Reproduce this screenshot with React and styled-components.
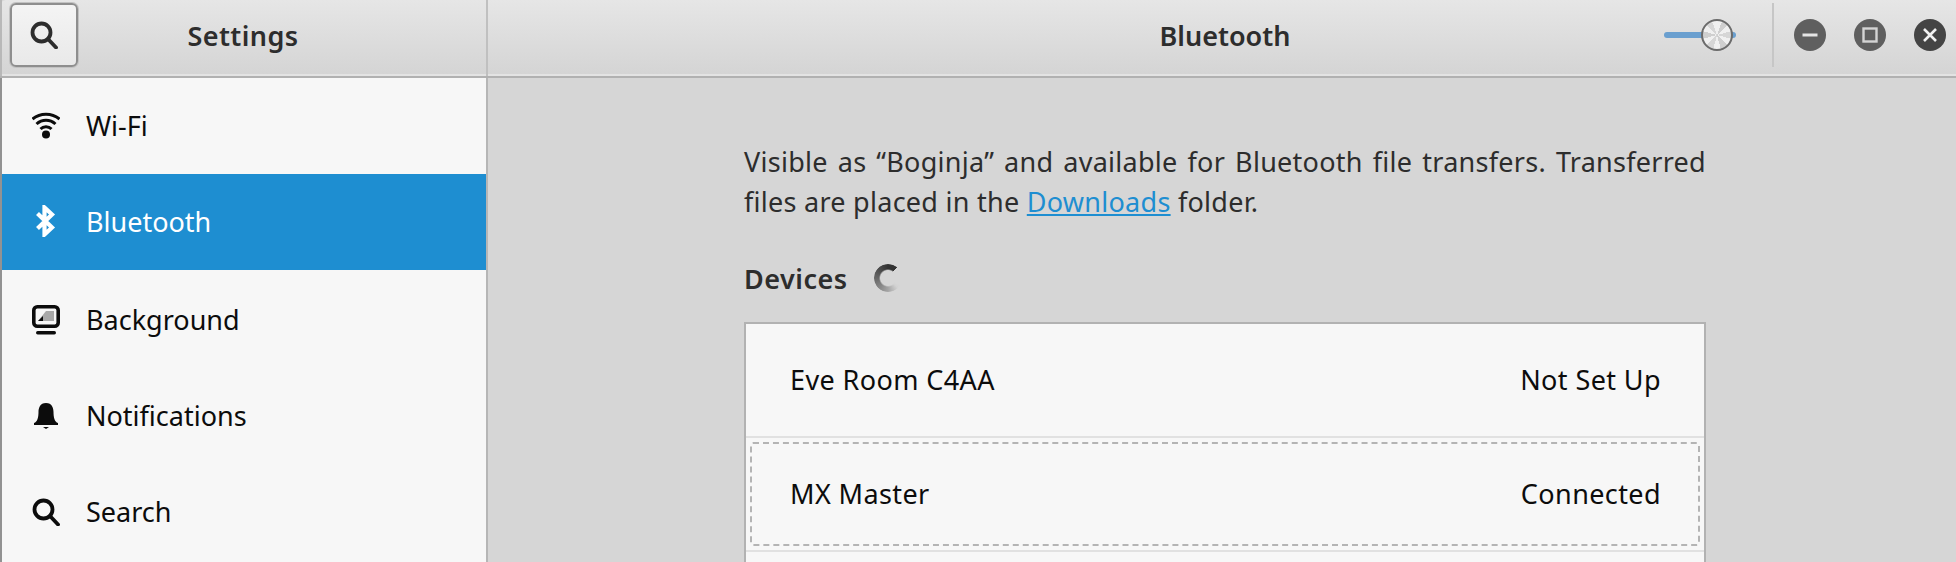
import React from 'react'
import styled, { createGlobalStyle } from 'styled-components'

const GlobalStyle = createGlobalStyle`
  html, body {
    margin: 0;
    height: 100%;
    overflow: hidden;
    background: #d6d6d6;
  }
  body {
    font-family: 'Noto Sans', 'Open Sans', sans-serif;
    font-size: 27px;
    color: #2d2d2d;
  }
`

const Window = styled.div`
  width: 1956px;
  height: 562px;
  display: flex;
  flex-direction: column;
  overflow: hidden;
`

const TitleBar = styled.header`
  height: 78px;
  flex: none;
  display: flex;
  box-sizing: border-box;
  border-bottom: 2px solid #b1b1b1;
  box-shadow: inset 0 -2px 0 #e3e3e3;
  background: linear-gradient(#e6e6e6, #d4d4d4);
  border-top-left-radius: 6px;
`

const SidebarHeader = styled.div`
  width: 488px;
  flex: none;
  box-sizing: border-box;
  display: flex;
  align-items: center;
  padding: 0 0 6px 10px;
  border-left: 2px solid #b8b8b8;
  border-right: 2px solid #c0c0c0;
`

const SearchButton = styled.button`
  width: 68px;
  height: 64px;
  padding: 0;
  display: flex;
  align-items: center;
  justify-content: center;
  box-sizing: border-box;
  border: 2px solid #8e8e8e;
  border-radius: 6px;
  background: linear-gradient(#f4f4f4, #e9e9e9);
  box-shadow: 0 0 0 1px #c2c2c2;
  margin-left: -2px;
`

const HeaderTitle = styled.h1`
  margin: 0;
  padding-top: 2px;
  font-size: 27px;
  font-weight: 600;
  color: #2d2d2d;
  line-height: 36px;
  text-align: center;
  flex: 1;
`

const SidebarTitle = styled(HeaderTitle)`
  padding-right: 78px;
  letter-spacing: 0.4px;
`

const MainHeader = styled.div`
  flex: 1;
  display: flex;
  align-items: center;
  padding: 0 10px 6px 0;
`

const MainTitle = styled(HeaderTitle)`
  padding-left: 298px;
`

const SwitchTrack = styled.div`
  position: relative;
  width: 72px;
  height: 6px;
  border-radius: 3px;
  background: #6a9fcf;
  margin-right: 36px;
`

const SwitchKnob = styled.div`
  position: absolute;
  left: 37px;
  top: -13px;
  width: 32px;
  height: 32px;
  box-sizing: border-box;
  border-radius: 50%;
  border: 2px solid #6b6b6b;
  background: conic-gradient(
    #f0f0f0 0deg 20deg, #cfcfcf 20deg 45deg, #f0f0f0 45deg 75deg, #d6d6d6 75deg 105deg,
    #f0f0f0 105deg 135deg, #cfcfcf 135deg 165deg, #f0f0f0 165deg 195deg, #d6d6d6 195deg 225deg,
    #f0f0f0 225deg 255deg, #cfcfcf 255deg 285deg, #f0f0f0 285deg 315deg, #d6d6d6 315deg 340deg,
    #f0f0f0 340deg
  );
`

const HeaderDivider = styled.div`
  width: 2px;
  height: 64px;
  background: #c6c6c6;
  margin-right: 20px;
`

const WindowButtons = styled.div`
  display: flex;
  gap: 28px;
`

const RoundButton = styled.div`
  width: 32px;
  height: 32px;
  border-radius: 50%;
  display: flex;
  align-items: center;
  justify-content: center;
  background: ${props => (props.$dark ? '#444444' : '#5f5f5f')};
`

const Body = styled.div`
  flex: 1;
  display: flex;
  min-height: 0;
`

const Sidebar = styled.nav`
  width: 488px;
  flex: none;
  box-sizing: border-box;
  border-left: 2px solid #929292;
  border-right: 2px solid #b6b6b6;
  background: #f7f7f7;
`

const SidebarRow = styled.div`
  height: 96px;
  display: flex;
  align-items: center;
  box-sizing: border-box;
  padding: ${props => (props.$lower ? '3px 0 0' : '0 0 2px')};
  background: ${props => (props.$active ? '#1e8ed1' : 'transparent')};
  color: ${props => (props.$active ? '#ffffff' : '#0c0c0c')};
`

const RowIcon = styled.span`
  width: 28px;
  height: 28px;
  margin-left: 30px;
  margin-right: 26px;
  display: flex;
  align-items: center;
  justify-content: center;
`

const Content = styled.main`
  flex: 1;
  padding: 64px 0 0 256px;
`

const Column = styled.div`
  width: 962px;
`

const Intro = styled.div`
  font-size: 27px;
  line-height: 40px;
  color: #2d2d2d;
  letter-spacing: 0.27px;
`

const IntroLine = styled.div`
  white-space: nowrap;
`

const JustifiedLine = styled(IntroLine)`
  white-space: normal;
  text-align: justify;
  text-align-last: justify;
`

const DownloadsLink = styled.a`
  color: #1e8ed1;
  text-decoration: underline;
`

const DevicesHeading = styled.div`
  display: flex;
  align-items: center;
  gap: 26px;
  margin-top: 26px;
  height: 60px;
  font-weight: 600;
  letter-spacing: 0.5px;
  color: #2d2d2d;
`

const Spinner = styled.div`
  width: 28px;
  height: 28px;
  border-radius: 50%;
  background: conic-gradient(from 40deg, transparent 0deg, transparent 80deg, #d2d2d2 95deg, #a4a4a4 140deg, #666666 230deg, #333333 320deg, #333333 360deg);
  -webkit-mask: radial-gradient(circle, transparent 7.5px, #000 9px);
  mask: radial-gradient(circle, transparent 7.5px, #000 9px);
`

const DeviceList = styled.div`
  margin-top: 14px;
  box-sizing: border-box;
  border: 2px solid #b2b2b2;
  background: #f7f7f7;
  height: 300px;
`

const DeviceRow = styled.div`
  height: 114px;
  box-sizing: border-box;
  display: flex;
  align-items: center;
  justify-content: space-between;
  padding: 0 43px 2px 44px;
  color: #0c0c0c;
  letter-spacing: 0.4px;
  border-bottom: 2px solid #e1e1e1;
  position: relative;
`

const FocusRing = styled.div`
  position: absolute;
  inset: 4px;
  border: 2px dashed #b4b4b4;
  border-radius: 3px;
`

const SearchGlyph = ({ color = '#111' }) => (
  <svg width="28" height="28" viewBox="0 0 28 28" fill="none" stroke={color} strokeWidth="3.8">
    <circle cx="11.5" cy="11.5" r="9" />
    <path d="M18 18 L26 26.5" strokeLinecap="round" />
  </svg>
)

const WifiGlyph = () => (
  <svg width="28" height="28" viewBox="0 0 28 28" fill="none" stroke="#0c0c0c" strokeWidth="3">
    <path d="M0.5 8 C8 1.5 20 1.5 27.5 8" />
    <path d="M4.5 13 C10 8 18 8 23.5 13" />
    <path d="M8.5 18 C11.5 15 16.5 15 19.5 18" />
    <circle cx="14" cy="23.5" r="4" fill="#0c0c0c" stroke="none" />
  </svg>
)

const BluetoothGlyph = () => (
  <svg width="20" height="32" viewBox="0 0 20 32" fill="none" stroke="#ffffff" strokeWidth="4.2">
    <path d="M1.5 8.5 L16 22.5 L8.5 29.5 V2.5 L16 9.5 L1.5 23.5" />
  </svg>
)

const BackgroundGlyph = () => (
  <svg width="28" height="30" viewBox="0 0 28 30">
    <rect x="1.8" y="1.8" width="24.4" height="19.4" rx="3.5" fill="none" stroke="#0c0c0c" strokeWidth="3.6" />
    <path d="M6 16 H22 V6 H14 Z" fill="#a8a8a8" />
    <path d="M6 16 H11 V11 Z" fill="#0c0c0c" />
    <rect x="4" y="26" width="20" height="3.4" rx="1.7" fill="#0c0c0c" />
  </svg>
)

const BellGlyph = () => (
  <svg width="26" height="28" viewBox="0 0 26 28" fill="#0c0c0c">
    <path d="M13 1 C19 1 20.5 6 20.5 10 C20.5 15 21.5 20 25 21 V23 H1 V21 C4.5 20 5.5 15 5.5 10 C5.5 6 7 1 13 1 Z" />
    <path d="M10 25 H16 L13 27 Z" />
  </svg>
)

const MinimizeGlyph = () => (
  <svg width="16" height="16" viewBox="0 0 16 16">
    <rect x="0.5" y="6.5" width="15" height="3" fill="#e4e4e4" />
  </svg>
)

const MaximizeGlyph = () => (
  <svg width="16" height="16" viewBox="0 0 16 16" fill="none">
    <rect x="1.5" y="1.5" width="13" height="13" stroke="#d4d4d4" strokeWidth="2.4" />
  </svg>
)

const CloseGlyph = () => (
  <svg width="16" height="16" viewBox="0 0 16 16" fill="none" stroke="#f0f0f0" strokeWidth="2.6">
    <path d="M2 2 L14 14 M14 2 L2 14" />
  </svg>
)

const sections = [
  { label: 'Wi-Fi', icon: <WifiGlyph /> },
  { label: 'Bluetooth', icon: <BluetoothGlyph />, active: true },
  { label: 'Background', icon: <BackgroundGlyph />, lower: true },
  { label: 'Notifications', icon: <BellGlyph />, lower: true },
  { label: 'Search', icon: <SearchGlyph color="#0c0c0c" />, lower: true },
]

export default function App() {
  return (
    <>
      <GlobalStyle />
      <Window>
        <TitleBar>
          <SidebarHeader>
            <SearchButton>
              <SearchGlyph color="#2d2d2d" />
            </SearchButton>
            <SidebarTitle>Settings</SidebarTitle>
          </SidebarHeader>
          <MainHeader>
            <MainTitle>Bluetooth</MainTitle>
            <SwitchTrack>
              <SwitchKnob />
            </SwitchTrack>
            <HeaderDivider />
            <WindowButtons>
              <RoundButton><MinimizeGlyph /></RoundButton>
              <RoundButton><MaximizeGlyph /></RoundButton>
              <RoundButton $dark><CloseGlyph /></RoundButton>
            </WindowButtons>
          </MainHeader>
        </TitleBar>
        <Body>
          <Sidebar>
            {sections.map(section => (
              <SidebarRow key={section.label} $active={section.active} $lower={section.lower}>
                <RowIcon>{section.icon}</RowIcon>
                {section.label}
              </SidebarRow>
            ))}
          </Sidebar>
          <Content>
            <Column>
              <Intro>
                <JustifiedLine>
                  Visible as “Boginja” and available for Bluetooth file transfers. Transferred
                </JustifiedLine>
                <IntroLine>
                  files are placed in the <DownloadsLink href="#">Downloads</DownloadsLink> folder.
                </IntroLine>
              </Intro>
              <DevicesHeading>
                Devices
                <Spinner />
              </DevicesHeading>
              <DeviceList>
                <DeviceRow>
                  <span>Eve Room C4AA</span>
                  <span>Not Set Up</span>
                </DeviceRow>
                <DeviceRow>
                  <FocusRing />
                  <span>MX Master</span>
                  <span>Connected</span>
                </DeviceRow>
              </DeviceList>
            </Column>
          </Content>
        </Body>
      </Window>
    </>
  )
}
